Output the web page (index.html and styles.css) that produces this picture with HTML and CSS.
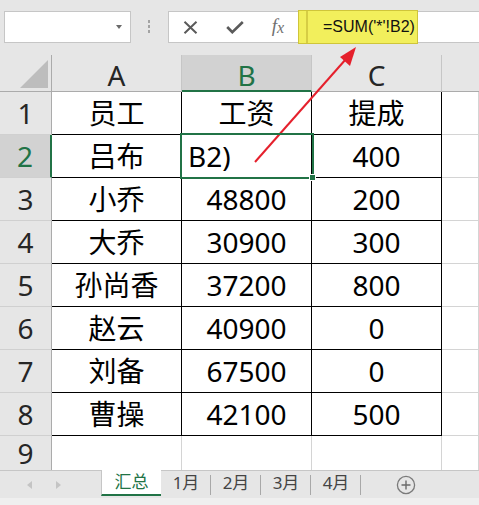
FILE: index.html
```html
<!DOCTYPE html>
<html>
<head>
<meta charset="utf-8">
<link rel="stylesheet" href="styles.css">
</head>
<body>
<div class="app">
  <div class="topbar">
    <div class="namebox"><span class="caret"></span></div>
    <div class="grip"><i></i><i></i><i></i></div>
    <div class="fbar">
      <span class="fbtn b1"><svg width="15" height="13" viewBox="0 0 15 13"><path d="M1.5 0.8L13.5 12.2M13.5 0.8L1.5 12.2" stroke="#5a5a5a" stroke-width="2" fill="none"/></svg></span>
      <span class="fbtn b2"><svg width="18" height="13" viewBox="0 0 18 13"><path d="M1.2 6L6.3 11.2L16.8 1" stroke="#5a5a5a" stroke-width="2.6" fill="none"/></svg></span>
      <span class="fbtn b3 fx">f<span class="fxx">x</span></span>
      <span class="hl">=SUM('*'!B2)</span>
    </div>
  </div>

  <div class="sheet">
    <div class="corner"><span class="tri"></span></div>
    <div class="ch">A</div><div class="ch sel">B</div><div class="ch">C</div><div class="ch last"></div>

    <div class="rh">1</div><div class="c">员工</div><div class="c">工资</div><div class="c">提成</div><div class="e"></div>
    <div class="rh sel">2</div><div class="c">吕布</div><div class="c active">B2)<span class="handle"></span></div><div class="c">400</div><div class="e"></div>
    <div class="rh">3</div><div class="c">小乔</div><div class="c">48800</div><div class="c">200</div><div class="e"></div>
    <div class="rh">4</div><div class="c">大乔</div><div class="c">30900</div><div class="c">300</div><div class="e"></div>
    <div class="rh">5</div><div class="c">孙尚香</div><div class="c">37200</div><div class="c">800</div><div class="e"></div>
    <div class="rh">6</div><div class="c">赵云</div><div class="c">40900</div><div class="c">0</div><div class="e"></div>
    <div class="rh">7</div><div class="c">刘备</div><div class="c">67500</div><div class="c">0</div><div class="e"></div>
    <div class="rh">8</div><div class="c">曹操</div><div class="c">42100</div><div class="c">500</div><div class="e"></div>
    <div class="rh nb">9</div><div class="e nb"></div><div class="e nb"></div><div class="e nb"></div><div class="e nb"></div>
  </div>

  <div class="tabbar">
    <div class="nav"><span class="tl"></span><span class="tr"></span></div>
    <div class="tab active">汇总</div>
    <div class="tab">1月</div>
    <div class="tab">2月</div>
    <div class="tab">3月</div>
    <div class="tab">4月</div>
    <div class="add"><svg width="20" height="20" viewBox="0 0 20 20"><circle cx="10" cy="10" r="8.6" stroke="#7a7a7a" stroke-width="1.3" fill="none"/><path d="M10 5.5V14.5M5.5 10H14.5" stroke="#6a6a6a" stroke-width="1.4"/></svg></div>
  </div>
  <div class="strip"></div>

  <svg class="arrow" width="479" height="505" viewBox="0 0 479 505">
    <line x1="255" y1="162" x2="346" y2="59" stroke="#e5202c" stroke-width="2"/>
    <polygon points="356,47 340,57 350,66" fill="#e5202c"/>
  </svg>
</div>
</body>
</html>
```

FILE: styles.css
```css
body {
  margin: 0;
  background: #e6e6e6;
  font-family: "Noto Sans", "Noto Sans CJK SC", sans-serif;
}

.app {
  position: relative;
  width: 479px;
  height: 505px;
  overflow: hidden;
}

/* ---------- formula bar ---------- */
.topbar {
  height: 55px;
  box-sizing: border-box;
  padding: 11px 0 0 4px;
  display: flex;
  align-items: flex-start;
  background: #e6e6e6;
}

.namebox {
  width: 127px;
  height: 32px;
  box-sizing: border-box;
  border: 1px solid #c6c6c6;
  background: #fff;
  display: flex;
  align-items: center;
  justify-content: flex-end;
  padding-right: 8px;
}

.caret {
  width: 0;
  height: 0;
  border-left: 3.5px solid transparent;
  border-right: 3.5px solid transparent;
  border-top: 4px solid #6a6a6a;
}

.grip {
  width: 37px;
  height: 32px;
  box-sizing: border-box;
  padding: 9px 0 0 17px;
  display: flex;
  flex-direction: column;
  gap: 2px;
}

.grip i {
  display: block;
  width: 2px;
  height: 3px;
  background: #a3a3a3;
}

.fbar {
  flex: 1;
  height: 32px;
  box-sizing: border-box;
  border: 1px solid #c6c6c6;
  border-right: none;
  background: #fff;
  display: flex;
  align-items: center;
}

.fbtn {
  display: flex;
  justify-content: center;
  align-items: center;
  height: 30px;
}

.b1 { width: 43px; }
.b2 { width: 46px; }
.b3 { width: 40px; }

.fx {
  font-family: "Liberation Serif", serif;
  font-style: italic;
  font-size: 19px;
  color: #707070;
  padding-bottom: 2px;
  box-sizing: border-box;
}

.fxx {
  font-size: 16px;
  position: relative;
  top: 2px;
}

.hl {
  position: relative;
  width: 120px;
  height: 34px;
  margin: -2px 0;
  box-sizing: border-box;
  background: #f2ef5c;
  border: 1px solid #cfc53a;
  padding-left: 24px;
  font-family: "Liberation Sans", sans-serif;
  font-size: 16px;
  line-height: 32px;
  color: #111;
  white-space: nowrap;
}

.hl::before {
  content: "";
  position: absolute;
  left: 7px;
  top: 0;
  bottom: 0;
  width: 2px;
  background: #d6cd44;
}

/* ---------- grid ---------- */
.sheet {
  display: grid;
  grid-template-columns: 52px 130px 130px 130px 37px;
  grid-template-rows: 37px repeat(8, 43px) 34px;
  background: #fff;
}

.sheet > div {
  box-sizing: border-box;
  display: flex;
  align-items: center;
  justify-content: center;
  font-size: 28px;
  line-height: 1;
  color: #000;
  white-space: nowrap;
}

.corner {
  background: #e6e6e6;
  border-right: 1px solid #ababab;
  border-bottom: 1px solid #ababab;
  align-items: flex-end !important;
  justify-content: flex-end !important;
  padding: 0 3px 3px 0;
}

.tri {
  width: 0;
  height: 0;
  border-left: 28px solid transparent;
  border-bottom: 28px solid #bdbdbd;
}

.sheet > .ch {
  background: #e6e6e6;
  border-right: 1px solid #c6c6c6;
  border-bottom: 1px solid #ababab;
  color: #262626;
  padding-top: 4px;
}

.sheet > .ch.sel {
  background: #d2d2d2;
  border-bottom: 2px solid #217346;
  color: #217346;
}

.sheet > .ch.last {
  border-right: none;
}

.sheet > .rh {
  background: #e6e6e6;
  border-right: 1px solid #ababab;
  border-bottom: 1px solid #d0d0d0;
  color: #262626;
}

.sheet > .rh.sel {
  background: #d2d2d2;
  border-right: 2px solid #217346;
  color: #217346;
}

.c {
  border-right: 1px solid #000;
  border-bottom: 1px solid #000;
}

.e {
  border-right: 1px solid #d4d4d4;
  border-bottom: 1px solid #d4d4d4;
}

.sheet > .nb {
  border-bottom: none;
}

.sheet > .active {
  position: relative;
  justify-content: flex-start;
  padding-left: 6px;
}

.active::after {
  content: "";
  position: absolute;
  left: -2px;
  top: -2px;
  right: -3px;
  bottom: -2px;
  border: 2px solid #217346;
  z-index: 2;
}

.handle {
  position: absolute;
  right: -5px;
  bottom: -4px;
  width: 5px;
  height: 5px;
  background: #217346;
  border: 1px solid #fff;
  z-index: 3;
}

/* ---------- sheet tabs ---------- */
.tabbar {
  height: 28px;
  box-sizing: border-box;
  border-top: 1px solid #c6c6c6;
  background: #e6e6e6;
  display: flex;
  align-items: stretch;
}

.nav {
  width: 101px;
  box-sizing: border-box;
  padding-left: 27px;
  display: flex;
  align-items: center;
  gap: 24px;
}

.tl {
  width: 0;
  height: 0;
  border-right: 5px solid #c4c4c4;
  border-top: 4.5px solid transparent;
  border-bottom: 4.5px solid transparent;
}

.tr {
  width: 0;
  height: 0;
  border-left: 5px solid #c4c4c4;
  border-top: 4.5px solid transparent;
  border-bottom: 4.5px solid transparent;
}

.tab {
  position: relative;
  width: 50px;
  box-sizing: border-box;
  display: flex;
  align-items: center;
  justify-content: center;
  padding-bottom: 4px;
  font-size: 17px;
  line-height: 1;
  color: #444;
}

.tab::after {
  content: "";
  position: absolute;
  right: 0;
  top: 4px;
  width: 1px;
  height: 20px;
  background: #a8a8a8;
}

.tab.active {
  width: 60px;
  height: 26px;
  margin-top: -1px;
  padding-bottom: 2px;
  background: #fff;
  border-left: 1px solid #c6c6c6;
  border-bottom: 2px solid #217346;
  color: #217346;
}

.tab.active::after {
  display: none;
}

.add {
  margin-left: 35px;
  display: flex;
  align-items: center;
}

.strip {
  height: 7px;
  background: #efefef;
}

.arrow {
  position: absolute;
  left: 0;
  top: 0;
  pointer-events: none;
}
```
